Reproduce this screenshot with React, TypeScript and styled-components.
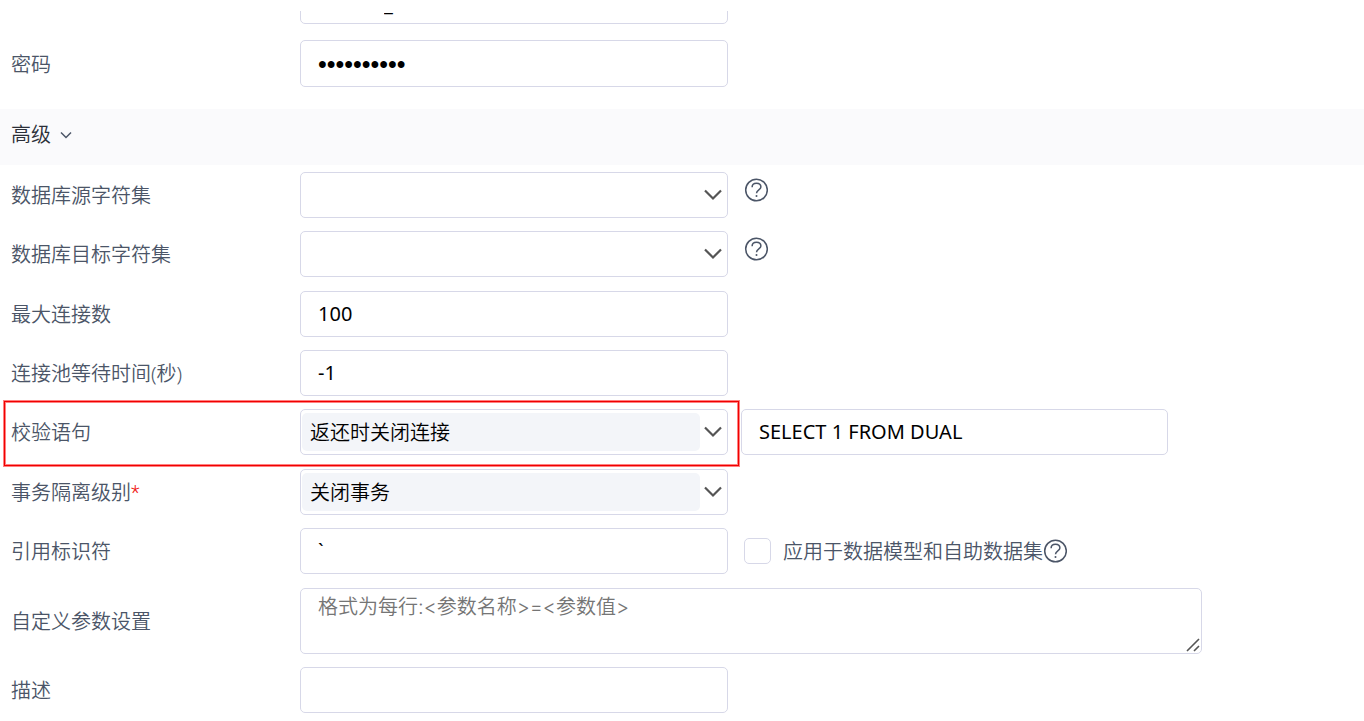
import React, { useState } from "react";
import styled, { createGlobalStyle, css } from "styled-components";

const GlobalStyle = createGlobalStyle`
  *, *::before, *::after { box-sizing: border-box; }
  body {
    margin: 0;
    background: #ffffff;
    color: #4b5567;
    font-family: "Noto Sans", "Noto Sans CJK SC", sans-serif;
    font-size: 20px;
    line-height: 28px;
  }
`;

const Page = styled.main`
  padding: 11px 0 8px;
`;

const ClippedRow = styled.div`
  display: flex;
  align-items: flex-end;
  height: 13px;
  overflow: hidden;
  padding-left: 300px;
`;

const Groups = styled.div`
  display: flex;
  flex-direction: column;
  gap: 14px;
  padding-top: 7px;
`;

const Group = styled.div`
  display: flex;
  flex-direction: column;
  gap: 13px;
`;

const Row = styled.div`
  display: flex;
  align-items: center;
`;

const PasswordRow = styled(Row)`
  margin: 16px 0 22px;
`;

const Pair = styled.div<{ $wide?: boolean }>`
  position: relative;
  display: flex;
  align-items: center;
  flex: 0 1 ${(p) => (p.$wide ? "1202px" : "728px")};
  min-width: 0;
`;

const Label = styled.label`
  flex: 0 0 300px;
  padding: 2px 0 0 11px;
  font-weight: 350;
`;

const Required = styled.span`
  color: #f01414;
  font-family: Roboto, sans-serif;
`;

const frame = css`
  border: 1px solid #d7d8e8;
  border-radius: 5px;
  background: #ffffff;
  color: #000000;
`;

const TextInput = styled.input<{ $tall?: boolean }>`
  ${frame}
  flex: 0 1 428px;
  width: 428px;
  min-width: 0;
  height: ${(p) => (p.$tall ? 47 : 46)}px;
  padding: 0 17px 1px;
  font: inherit;
  outline-color: #8fa2d4;
`;

const UserInput = styled(TextInput)`
  padding: 6px 17px 0 83px;
`;

const PasswordInput = styled(TextInput)`
  padding: 1px 17px 0;
  font-family: "Liberation Sans", sans-serif;
  font-size: 25px;
`;

const SelectFrame = styled.div<{ $filled: boolean }>`
  ${frame}
  position: relative;
  display: flex;
  flex: 0 1 428px;
  min-width: 0;
  height: 46px;
  &::before {
    content: "";
    position: absolute;
    inset: 3px 27px 3px 1px;
    border-radius: 5px;
    background: ${(p) => (p.$filled ? "#f3f5f9" : "transparent")};
  }
  svg {
    position: absolute;
    right: 4px;
    top: 15px;
    pointer-events: none;
  }
`;

const Select = styled.select`
  position: relative;
  flex: 1;
  min-width: 0;
  appearance: none;
  border: 0;
  background: transparent;
  padding: 2px 30px 0 9px;
  color: #000000;
  font: inherit;
  font-weight: 350;
`;

const AreaFrame = styled.div`
  position: relative;
  display: flex;
  flex: 1;
  min-width: 0;
  svg {
    position: absolute;
    right: 2px;
    bottom: 2px;
    pointer-events: none;
  }
`;

const TextArea = styled.textarea`
  ${frame}
  flex: 1;
  min-width: 0;
  height: 66px;
  padding: 4px 17px;
  font: inherit;
  font-family: Inter, "Noto Sans CJK SC", sans-serif;
  font-weight: 350;
  resize: vertical;
  &::placeholder { color: #757575; }
  &::-webkit-resizer { display: none; }
`;

const SectionBar = styled.section`
  display: flex;
  align-items: center;
  height: 56px;
  padding: 0 11px 5px;
  background: #fafafc;
`;

const SectionToggle = styled.button`
  display: flex;
  align-items: center;
  gap: 8px;
  border: 0;
  padding: 0;
  background: none;
  color: #2b2f38;
  font: inherit;
  font-weight: 350;
`;

const HelpButton = styled.button<{ $aside?: boolean }>`
  display: flex;
  border: 0;
  padding: 0;
  background: none;
  color: #4b5567;
  ${(p) => p.$aside && "align-self: flex-start; margin: 6px 0 0 16px;"}
`;

const Extra = styled.div`
  display: flex;
  align-items: center;
  flex: 0 1 427px;
  min-width: 0;
  margin-left: 13px;
`;

const CheckGroup = styled.div`
  display: flex;
  align-items: center;
  margin-left: 16px;
  font-weight: 350;
  label { padding: 2px 0 0 12px; }
`;

const Checkbox = styled.input`
  ${frame}
  appearance: none;
  width: 27px;
  height: 26px;
  margin: 0;
  &:checked { background: #4b6ee0; }
`;

const Highlight = styled.div`
  position: absolute;
  inset: -9px -12px -12px 3px;
  border: 1px solid #ff8080;
  pointer-events: none;
  &::before {
    content: "";
    position: absolute;
    inset: 0;
    border: 1px solid #f00000;
  }
  &::after {
    content: "";
    position: absolute;
    inset: 1px;
    border: 1px solid #ff8080;
  }
`;

const Chevron = () => (
  <svg width="20" height="14" viewBox="0 0 20 14" fill="none" aria-hidden="true">
    <path d="M2 2.5L10 10.5L18 2.5" stroke="#555555" strokeWidth="2.2" />
  </svg>
);

const Help = ({ label, aside }: { label: string; aside?: boolean }) => (
  <HelpButton type="button" aria-label={label} $aside={aside}>
    <svg width="24" height="24" viewBox="0 0 24 24" fill="none" stroke="currentColor" aria-hidden="true">
      <circle cx="12.5" cy="12" r="10.8" strokeWidth="1.5" />
      <path d="M8.1 9.2C8.1 6.7 9.9 5.2 12.5 5.2C15.1 5.2 16.9 6.8 16.9 9C16.9 11.9 12.5 11.9 12.5 15.2" strokeWidth="1.5" />
      <circle cx="12.5" cy="18" r="1" fill="currentColor" stroke="none" />
    </svg>
  </HelpButton>
);

type SelectFieldProps = { id: string; label: string; value?: string; required?: boolean; marked?: boolean };

const SelectField = ({ id, label, value = "", required, marked }: SelectFieldProps) => (
  <Pair>
    <Label htmlFor={id}>
      {label}
      {required && <Required>*</Required>}
    </Label>
    <SelectFrame $filled={value !== ""}>
      <Select id={id} defaultValue={value}>
        <option value={value}>{value}</option>
      </Select>
      <Chevron />
    </SelectFrame>
    {marked && <Highlight />}
  </Pair>
);

const TextField = ({ id, label, value }: { id: string; label: string; value?: string }) => (
  <Pair>
    <Label htmlFor={id}>{label}</Label>
    <TextInput id={id} type="text" defaultValue={value} />
  </Pair>
);

export default function App() {
  const [open, setOpen] = useState(true);
  return (
    <Page>
      <GlobalStyle />
      <ClippedRow>
        <UserInput $tall type="text" aria-label="用户名" defaultValue="_" />
      </ClippedRow>
      <PasswordRow>
        <Pair>
          <Label htmlFor="password">密码</Label>
          <PasswordInput $tall id="password" type="password" defaultValue="0123456789" />
        </Pair>
      </PasswordRow>
      <SectionBar>
        <SectionToggle type="button" aria-expanded={open} onClick={() => setOpen(!open)}>
          高级
          <svg width="14" height="10" viewBox="0 0 14 10" fill="none" aria-hidden="true">
            <path d="M2 2.5L7 7.5L12 2.5" stroke="#4b5567" strokeWidth="1.5" />
          </svg>
        </SectionToggle>
      </SectionBar>
      {open && (
        <Groups>
          <Group>
            <Row>
              <SelectField id="sourceCharset" label="数据库源字符集" />
              <Help aside label="数据库源字符集" />
            </Row>
            <Row>
              <SelectField id="targetCharset" label="数据库目标字符集" />
              <Help aside label="数据库目标字符集" />
            </Row>
          </Group>
          <Group>
            <Row>
              <TextField id="maxConnections" label="最大连接数" value="100" />
            </Row>
            <Row>
              <TextField id="poolWait" label="连接池等待时间(秒)" value="-1" />
            </Row>
            <Row>
              <SelectField id="validation" label="校验语句" value="返还时关闭连接" marked />
              <Extra>
                <TextInput type="text" aria-label="校验语句" defaultValue="SELECT 1 FROM DUAL" />
              </Extra>
            </Row>
          </Group>
          <Group>
            <Row>
              <SelectField id="isolation" label="事务隔离级别" value="关闭事务" required />
            </Row>
            <Row>
              <TextField id="quote" label="引用标识符" value="`" />
              <CheckGroup>
                <Checkbox id="applyModel" type="checkbox" />
                <label htmlFor="applyModel">应用于数据模型和自助数据集</label>
                <Help label="应用于数据模型和自助数据集" />
              </CheckGroup>
            </Row>
          </Group>
          <Group>
            <Row>
              <Pair $wide>
                <Label htmlFor="params">自定义参数设置</Label>
                <AreaFrame>
                  <TextArea id="params" placeholder="格式为每行:<参数名称>=<参数值>" />
                  <svg width="14" height="14" viewBox="0 0 14 14" stroke="#555555" strokeWidth="1.6" aria-hidden="true">
                    <path d="M1 13L13 1M8 13L13 8" />
                  </svg>
                </AreaFrame>
              </Pair>
            </Row>
            <Row>
              <TextField id="description" label="描述" />
            </Row>
          </Group>
        </Groups>
      )}
    </Page>
  );
}
